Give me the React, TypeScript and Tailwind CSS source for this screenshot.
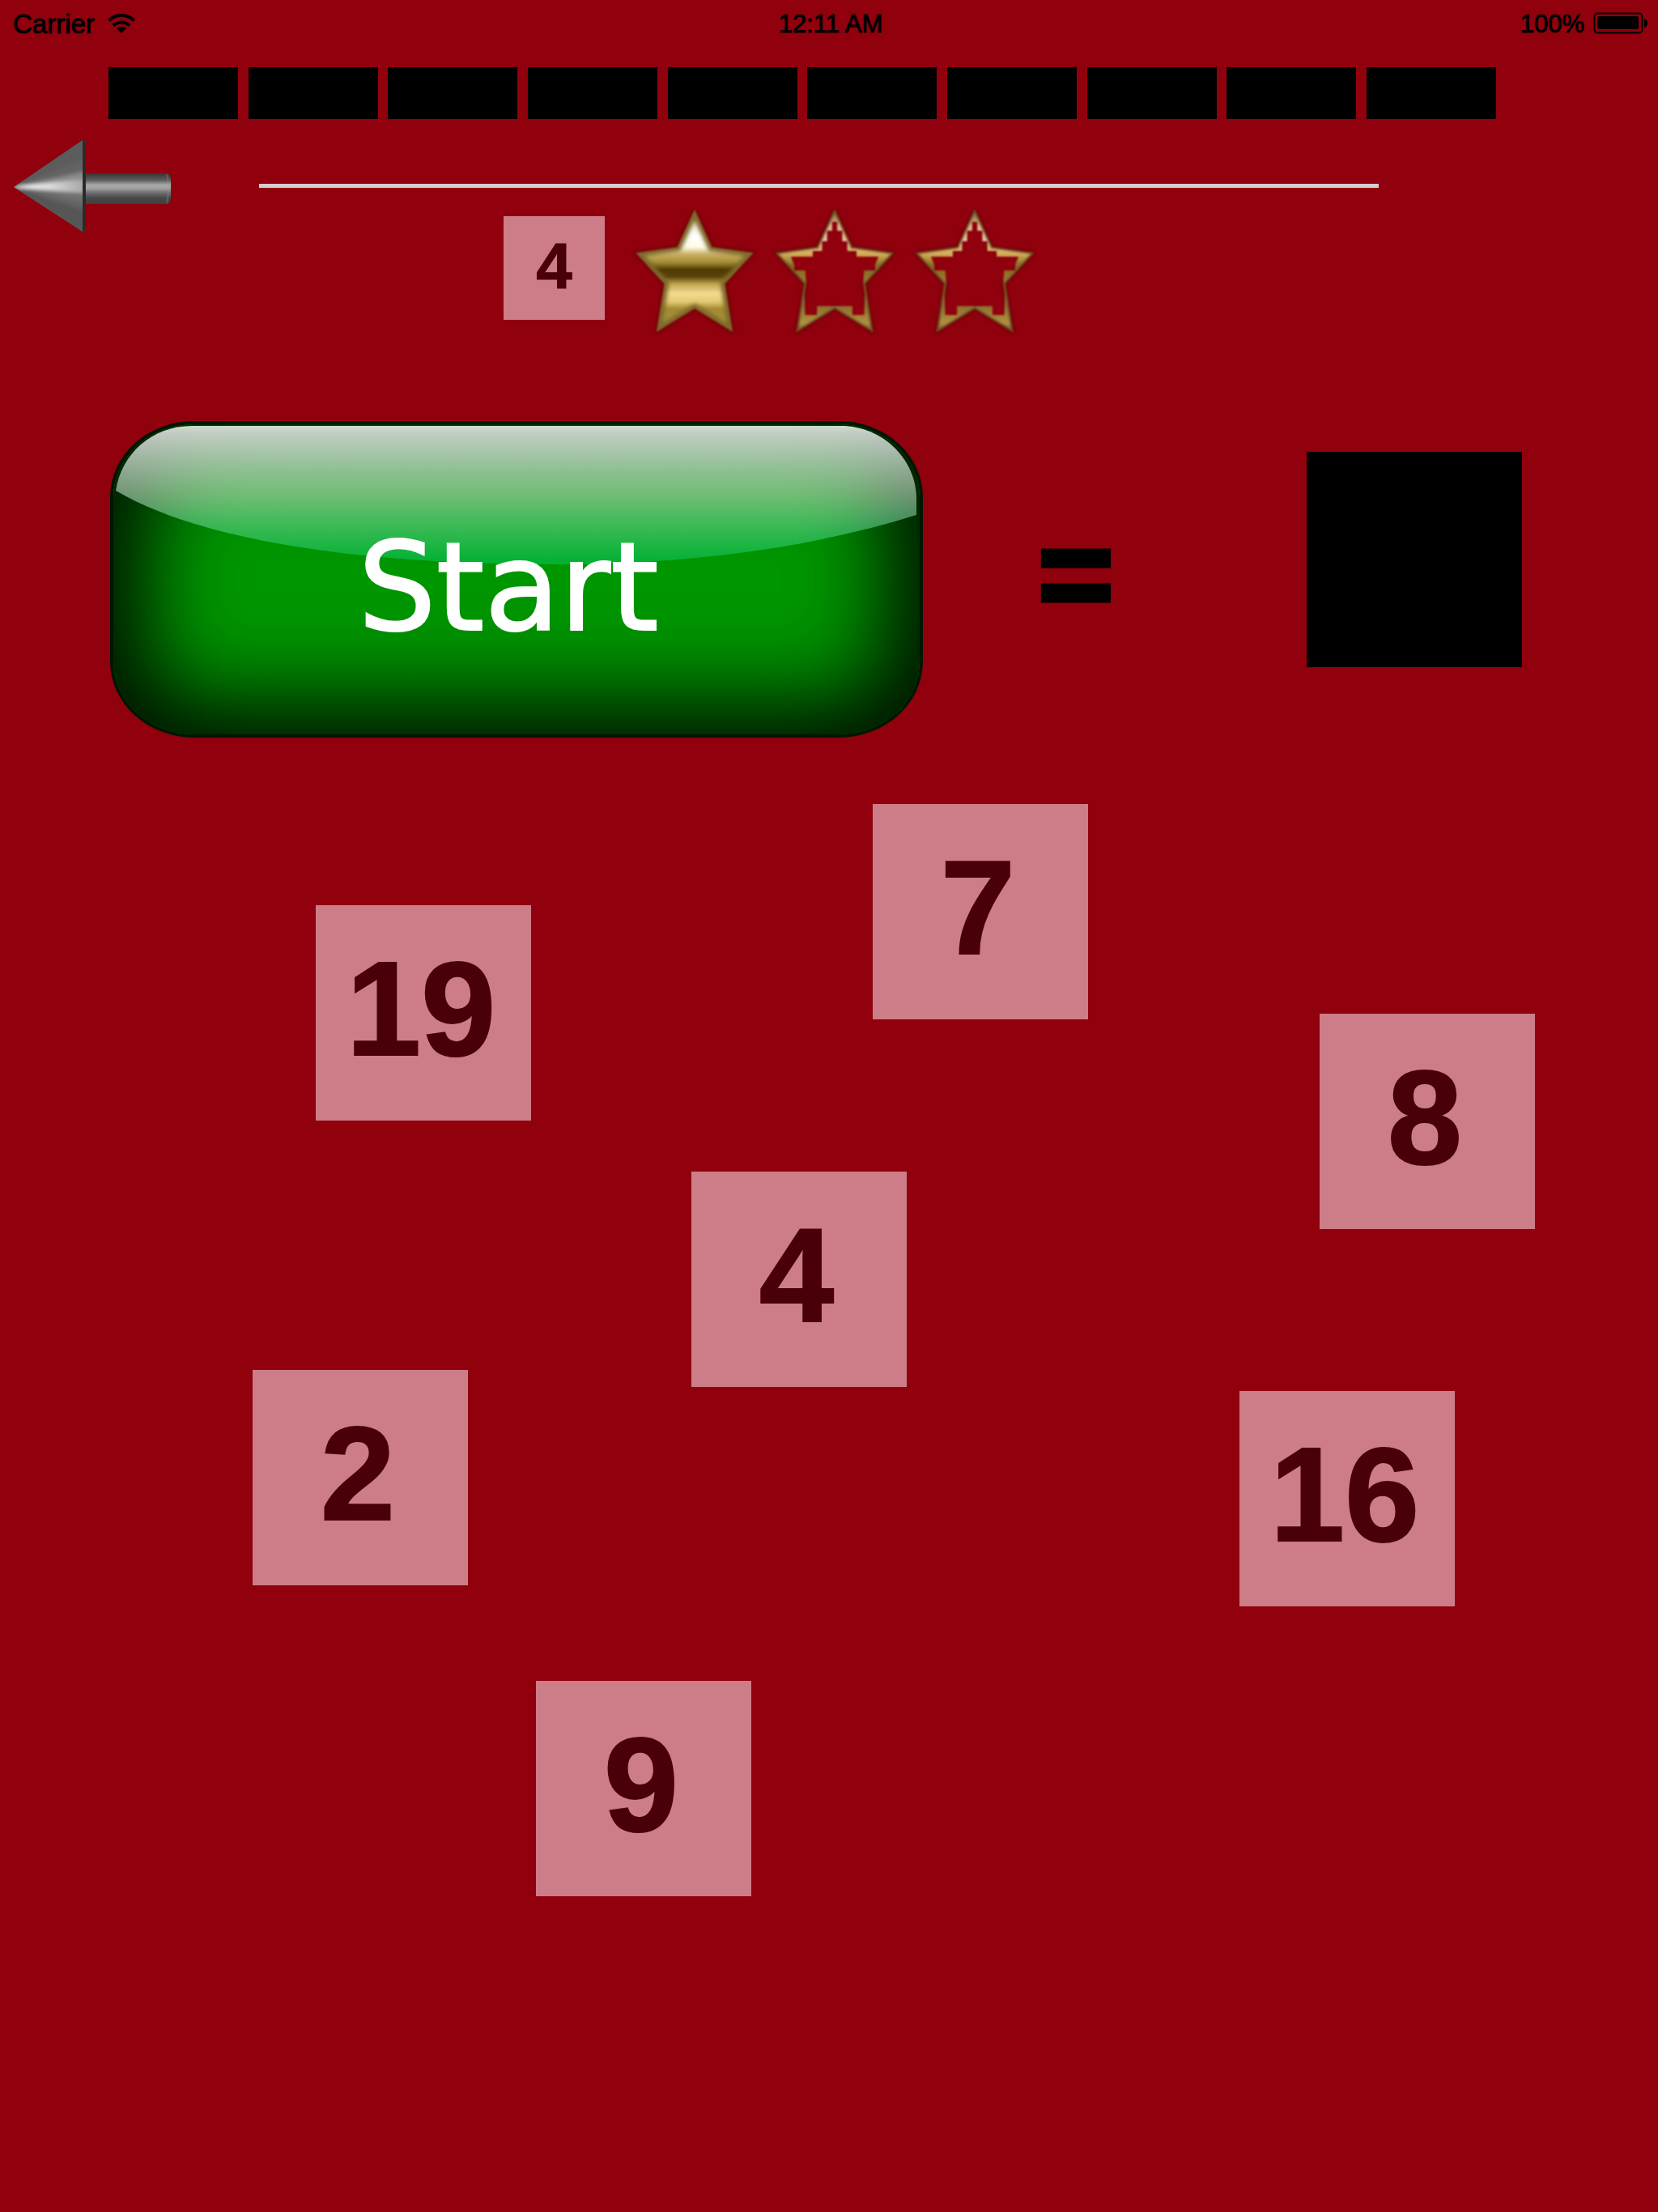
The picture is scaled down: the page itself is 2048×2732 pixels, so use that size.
type Tile = { value: number; x: number; y: number };

const BOARD_WIDTH = 2048;

// y is measured from the top of the board
const tiles: Tile[] = [
  { value: 7, x: 1078, y: 82 },
  { value: 19, x: 390, y: 207 },
  { value: 8, x: 1630, y: 341 },
  { value: 4, x: 854, y: 536 },
  { value: 2, x: 312, y: 781 },
  { value: 16, x: 1531, y: 807 },
  { value: 9, x: 662, y: 1165 },
];

function WifiIcon() {
  return (
    <svg viewBox="0 0 34 26" className="h-[26px] w-[34px]" aria-hidden="true">
      <g fill="none" stroke="#000" strokeWidth="4">
        <path d="M1.5 9.5 A22 22 0 0 1 32.5 9.5" />
        <path d="M7 15.5 A14.5 14.5 0 0 1 27 15.5" />
      </g>
      <path d="M17 25 L11 19 A9 9 0 0 1 23 19 Z" fill="#000" />
    </svg>
  );
}

function BatteryIcon() {
  return (
    <svg viewBox="0 0 68 28" className="h-7 w-[68px]" aria-hidden="true">
      <rect x="1.5" y="1.5" width="59" height="24" rx="4" fill="none" stroke="#000" strokeWidth="2" />
      <rect x="5" y="5" width="51" height="16" rx="2" fill="#000" />
      <path d="M63 8 Q67 9 67 13.5 Q67 18 63 19 Z" fill="#000" />
    </svg>
  );
}

function ArrowIcon() {
  return (
    <svg viewBox="0 0 196 118" className="h-[118px] w-[196px]" aria-hidden="true">
      <defs>
        <linearGradient id="shaft" x1="0" y1="0" x2="0" y2="1">
          <stop offset="0" stopColor="#343434" />
          <stop offset="0.22" stopColor="#5c5c5c" />
          <stop offset="0.38" stopColor="#a8a8a8" />
          <stop offset="0.48" stopColor="#a4a4a4" />
          <stop offset="0.64" stopColor="#6c6c6c" />
          <stop offset="0.8" stopColor="#484848" />
          <stop offset="1" stopColor="#404040" />
        </linearGradient>
        <linearGradient id="shine" x1="0" y1="0" x2="1" y2="0">
          <stop offset="0" stopColor="#ffffff" />
          <stop offset="0.5" stopColor="#dedede" />
          <stop offset="1" stopColor="#a0a0a0" />
        </linearGradient>
        <clipPath id="cone">
          <path d="M1 60 L86 2 Q90 0 90 10 V108 Q90 118 86 115 Z" />
        </clipPath>
        <filter id="soft" x="-20%" y="-20%" width="140%" height="140%">
          <feGaussianBlur stdDeviation="2" />
        </filter>
      </defs>
      <path d="M88 43 H191 Q196 43 195 62 Q196 81 191 81 H88 Z" fill="url(#shaft)" />
      <path d="M190 44 Q194 62 190 80" fill="none" stroke="#999" strokeOpacity="0.3" strokeWidth="2" />
      <g clipPath="url(#cone)">
        <rect width="100" height="118" fill="#5c5c5c" />
        <g filter="url(#soft)">
          <path d="M0 60 L92 24 V44 Z" fill="#646464" />
          <path d="M0 60 L92 40 V55 Z" fill="#8a8a8a" />
          <path d="M0 60 L92 76 V92 Z" fill="#646464" />
          <path d="M0 60 L92 90 V125 Z" fill="#565656" />
          <path d="M0 60 L92 66 V80 Z" fill="#707070" />
          <path d="M-4 60 L92 50 V68 Z" fill="url(#shine)" />
        </g>
        <path d="M88 0 V118" stroke="#2a2a2a" strokeWidth="4" />
      </g>
    </svg>
  );
}

const STAR = "M75 2 L95 47 L143 54 L110 91 L119 149 L75 121 L31 149 L40 91 L7 54 L55 47 Z";
const STAR_HOLE =
  "M72 15 H78 V26 H84 V39 H90 V51 H101 V58 H127 L123 68 V75 H110 L109 88 L111 103 L110 130 H96 V119 H54 V130 H40 L39 103 L41 88 L40 75 H27 V68 L23 58 H49 V51 H60 V39 H66 V26 H72 Z";

function StarIcon({ filled }: { filled: boolean }) {
  return (
    <svg
      viewBox="0 0 150 156"
      preserveAspectRatio="none"
      className="h-[156px] w-[156px]"
      role="img"
      aria-label={filled ? "Star earned" : "Star not earned"}
    >
      <defs>
        <linearGradient id="gold" gradientUnits="userSpaceOnUse" x1="0" y1="2" x2="0" y2="149">
          <stop offset="0" stopColor="#9a8a58" />
          <stop offset="0.1" stopColor="#e6dcc4" />
          <stop offset="0.2" stopColor="#ffffff" />
          <stop offset="0.3" stopColor="#fffbe6" />
          <stop offset="0.36" stopColor="#c9b165" />
          <stop offset="0.43" stopColor="#a28a35" />
          <stop offset="0.49" stopColor="#4e3a04" />
          <stop offset="0.55" stopColor="#5a430a" />
          <stop offset="0.61" stopColor="#bfa350" />
          <stop offset="0.69" stopColor="#f3dc90" />
          <stop offset="0.76" stopColor="#e2c872" />
          <stop offset="0.82" stopColor="#a48a2e" />
          <stop offset="1" stopColor="#a9934a" />
        </linearGradient>
        <linearGradient id="rim" gradientUnits="userSpaceOnUse" x1="0" y1="2" x2="0" y2="149">
          <stop offset="0" stopColor="#7a6638" />
          <stop offset="0.12" stopColor="#e0b08c" />
          <stop offset="0.24" stopColor="#ecc0a4" />
          <stop offset="0.36" stopColor="#d3ac58" />
          <stop offset="0.46" stopColor="#826820" />
          <stop offset="0.6" stopColor="#9c8030" />
          <stop offset="0.8" stopColor="#8e7030" />
          <stop offset="0.94" stopColor="#b09040" />
          <stop offset="1" stopColor="#75602a" />
        </linearGradient>
        <clipPath id="starClip">
          <path d={STAR} />
        </clipPath>
        <filter id="edge" x="-20%" y="-20%" width="140%" height="140%">
          <feGaussianBlur stdDeviation="2" />
        </filter>
        <filter id="fine" x="-20%" y="-20%" width="140%" height="140%">
          <feGaussianBlur stdDeviation="1" />
        </filter>
      </defs>
      <path d={STAR} fill="none" stroke="#4a0008" strokeOpacity="0.55" strokeWidth="5" filter="url(#edge)" />
      {filled ? (
        <g filter="url(#fine)">
          <path d={STAR} fill="url(#gold)" stroke="#80692c" strokeWidth="2" />
          <g clipPath="url(#starClip)">
            <path d={STAR} fill="none" stroke="#80692c" strokeWidth="9" filter="url(#edge)" />
            <path d="M20 55 H130" stroke="#c9af62" strokeWidth="7" filter="url(#edge)" />
          </g>
        </g>
      ) : (
        <g filter="url(#fine)">
          <path d={STAR + " " + STAR_HOLE} fill="url(#rim)" fillRule="evenodd" />
          <path d={STAR} fill="none" stroke="#75602a" strokeOpacity="0.7" strokeWidth="3" />
        </g>
      )}
    </svg>
  );
}

function StatusBar() {
  return (
    <header className="grid h-14 grid-cols-3 items-center pt-0.5 pl-4 pr-3 text-[31px] leading-none [-webkit-text-stroke:1px_#000]">
      <div className="flex items-center gap-4">
        <span className="text-[33px]">Carrier</span>
        <WifiIcon />
      </div>
      <div className="text-center">12:11 AM</div>
      <div className="flex items-center justify-end gap-[11px]">
        <span>100%</span>
        <BatteryIcon />
      </div>
    </header>
  );
}

function StartButton() {
  return (
    <button
      type="button"
      className="relative h-[391px] flex-1 overflow-hidden rounded-[104px/94px] border-4 border-[#001600] bg-[#009600] shadow-[inset_0_0_110px_42px_#001000]"
    >
      <svg viewBox="0 0 995 383" preserveAspectRatio="none" className="absolute inset-0 size-full" aria-hidden="true">
        <defs>
          <linearGradient id="gloss" gradientUnits="userSpaceOnUse" x1="0" y1="2" x2="0" y2="173">
            <stop offset="0" stopColor="#e2f0e2" stopOpacity="0.9" />
            <stop offset="0.05" stopColor="#ffffff" stopOpacity="0.76" />
            <stop offset="0.5" stopColor="#e0ffe8" stopOpacity="0.5" />
            <stop offset="1" stopColor="#00d070" stopOpacity="0.45" />
          </linearGradient>
        </defs>
        <path d="M3 82 C10 36 48 2 97 2 H898 C950 2 991 44 991 92 V112 C860 153 710 173 544 173 C310 173 110 145 3 82 Z" fill="url(#gloss)" />
      </svg>
      <span className="relative block pt-5 pr-5 font-['DejaVu_Sans',sans-serif] text-[152px] leading-none text-white [-webkit-text-stroke:2px_#fff]">
        Start
      </span>
    </button>
  );
}

export default function App() {
  return (
    <main className="flex min-h-screen flex-col bg-[#90000d] font-['Liberation_Sans',Arial,sans-serif] text-black">
      <StatusBar />

      <div
        className="mt-[27px] ml-[134px] mr-[200px] flex justify-between"
        role="progressbar"
        aria-label="Rounds"
        aria-valuemin={0}
        aria-valuemax={10}
        aria-valuenow={0}
      >
        {Array.from({ length: 10 }, (_, i) => (
          <div key={i} className="h-16 w-40 bg-black" />
        ))}
      </div>

      <section className="mt-6 flex items-start pl-4">
        <button type="button" aria-label="Back">
          <ArrowIcon />
        </button>
        <div className="flex-1">
          <div className="mt-14 ml-[108px] mr-[345px] h-[5px] bg-[#d5cdd2]" />
          <div className="mt-[27px] ml-[410px] flex gap-[17px]">
            <div className="mt-2 mr-4 flex h-32 w-[125px] items-center justify-center bg-[#cd7d88] pb-1 text-[80px] leading-none font-bold text-[#4a0008] [-webkit-text-stroke:1px_#4a0008]">
              4
            </div>
            <StarIcon filled />
            <StarIcon filled={false} />
            <StarIcon filled={false} />
          </div>
        </div>
      </section>

      <section className="mt-[105px] flex items-center pl-[136px] pr-[168px]">
        <StartButton />
        <span className="w-[378px] pb-4 text-center text-[158px] leading-none font-bold [-webkit-text-stroke:7px_#000]">=</span>
        <div className="ml-24 mb-[50px] size-[266px] bg-black" />
      </section>

      <section className="relative min-h-[1500px] flex-1">
        {tiles.map((t) => (
          <button
            key={t.value}
            type="button"
            className="absolute flex size-[266px] items-center justify-center bg-[#cd7d88] pr-1.5 pb-2.5 text-[166px] leading-none font-bold text-[#4a0008] [-webkit-text-stroke:2px_#4a0008]"
            style={{ left: `${(t.x / BOARD_WIDTH) * 100}%`, top: t.y }}
          >
            {t.value}
          </button>
        ))}
      </section>
    </main>
  );
}
